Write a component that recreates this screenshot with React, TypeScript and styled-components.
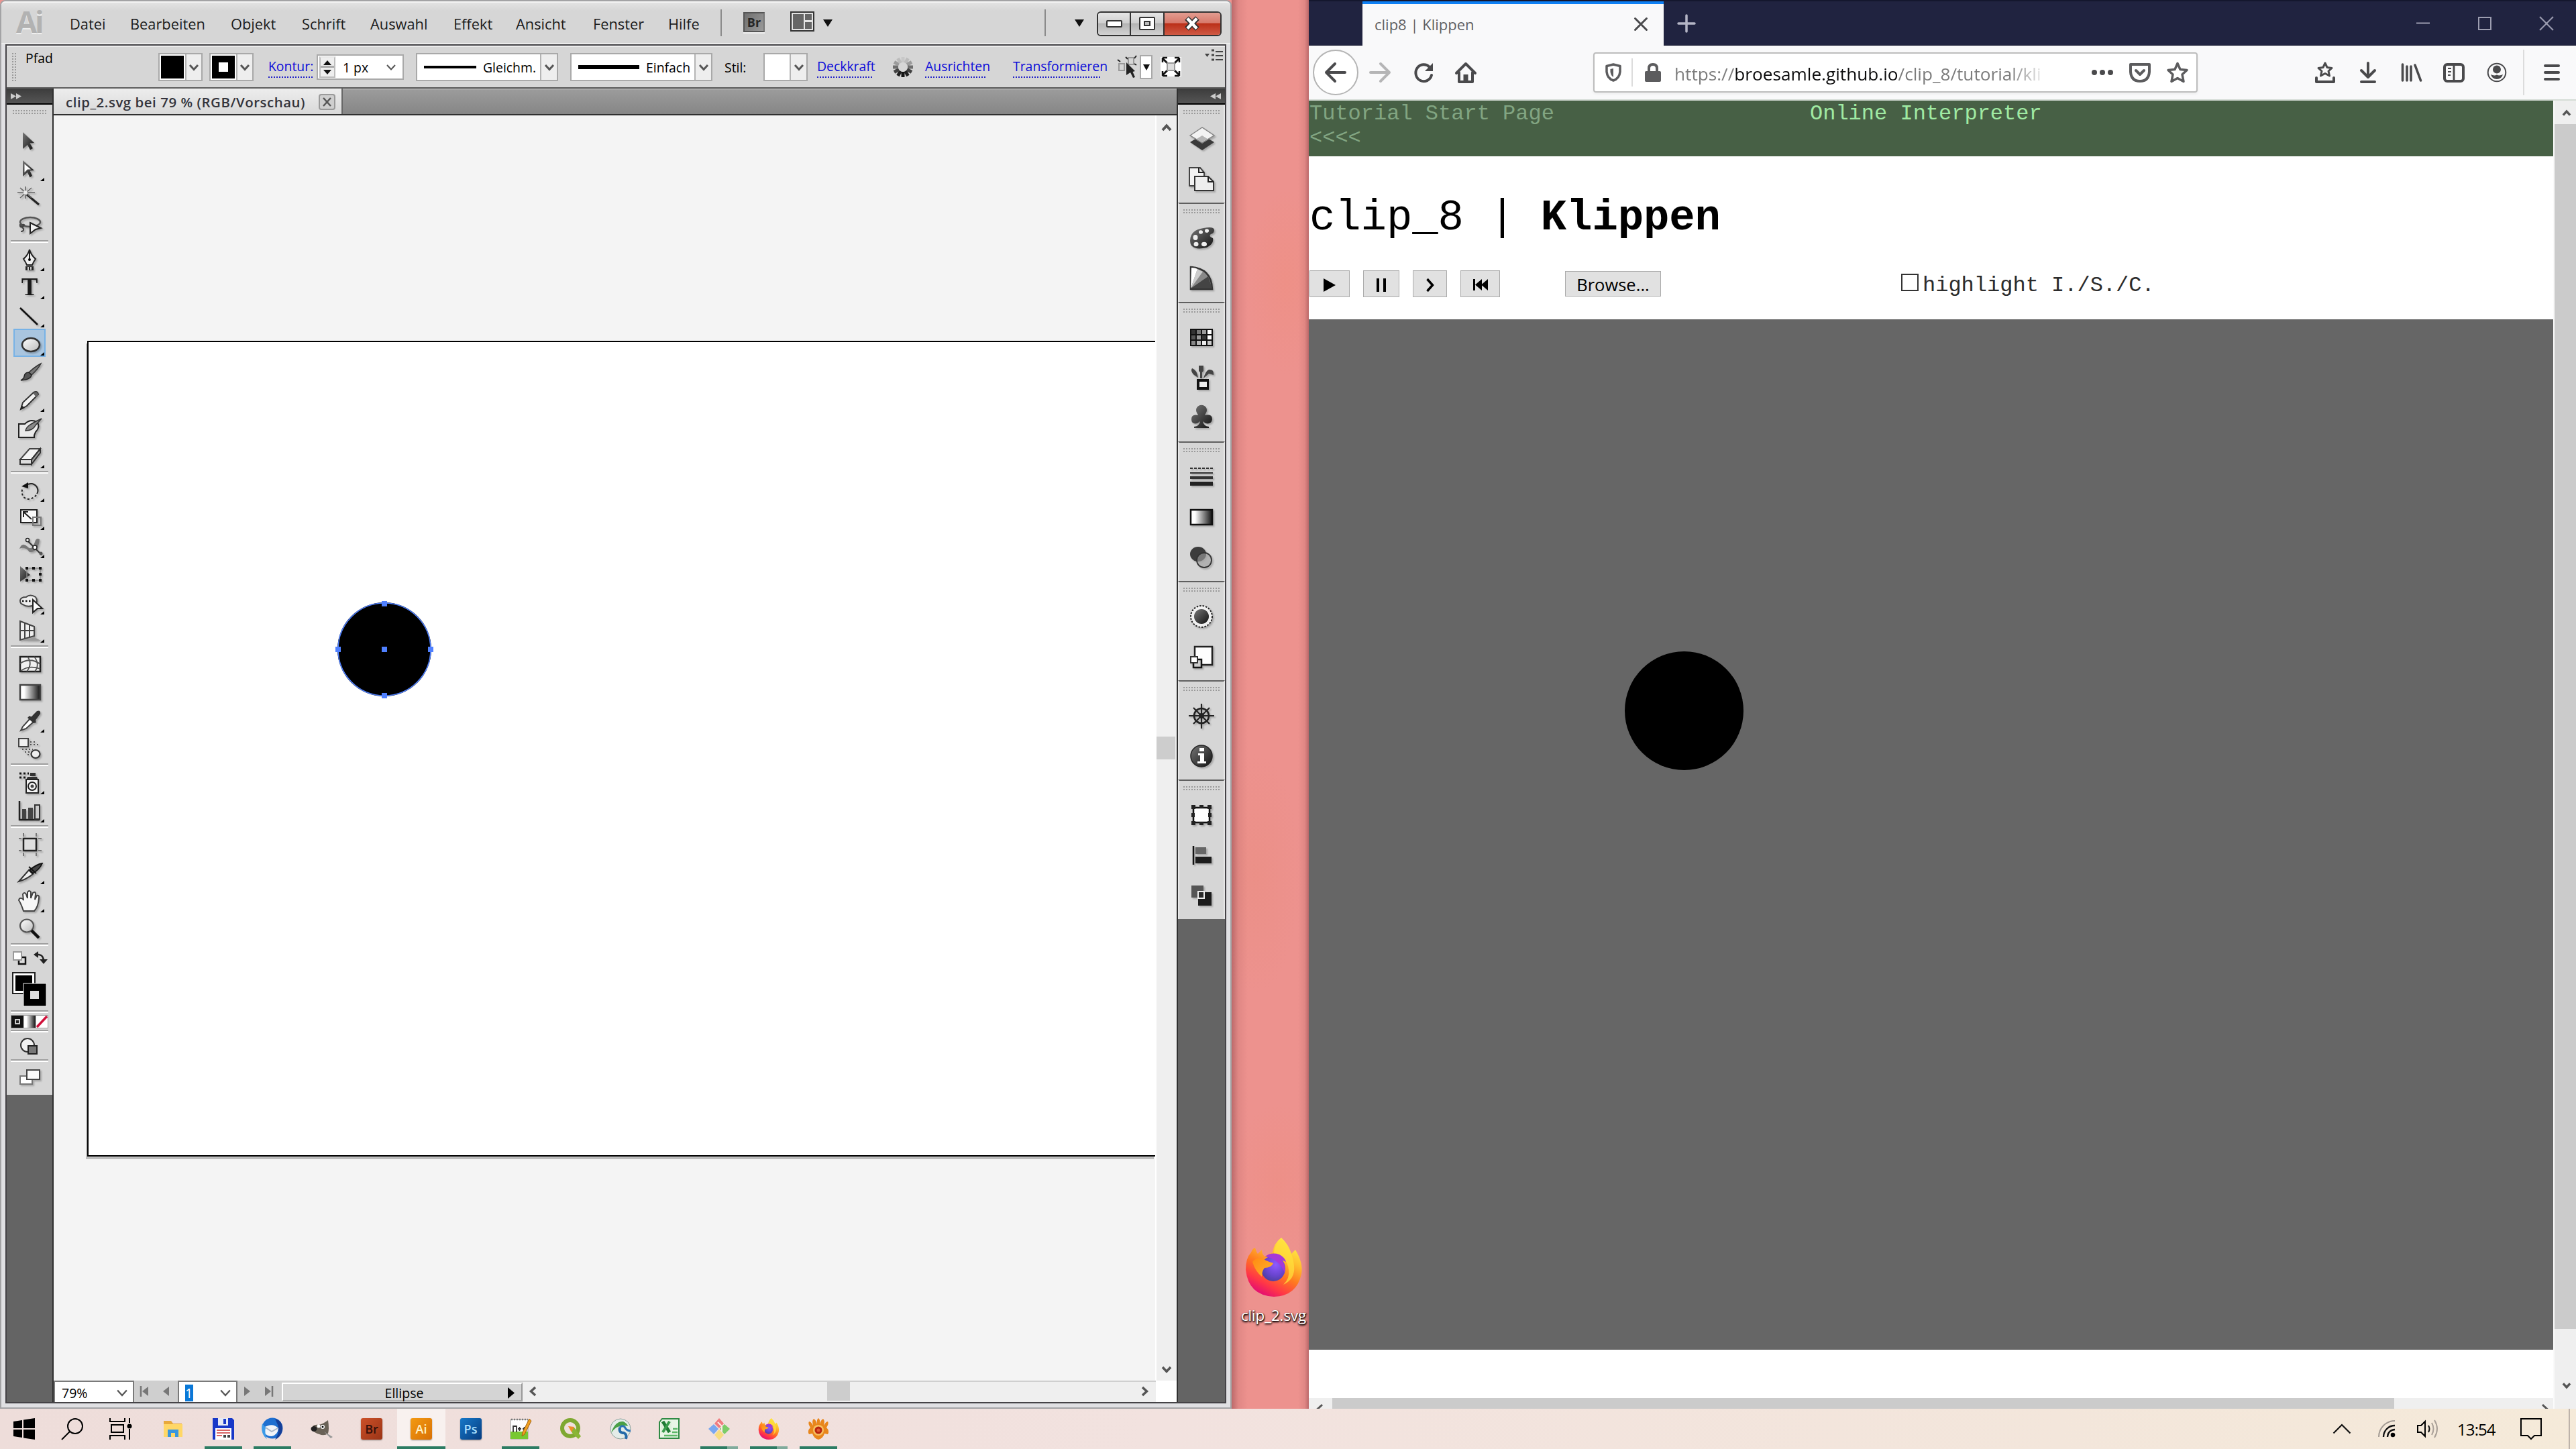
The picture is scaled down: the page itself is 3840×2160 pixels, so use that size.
import React from 'react';
import styled, { createGlobalStyle, css } from 'styled-components';

const UI = `"Open Sans", "Noto Sans", sans-serif`;
const MONO = `"Liberation Mono", monospace`;

const Global = createGlobalStyle`
  html, body { margin: 0; padding: 0; background: #ee9490; }
  *, *::before, *::after { box-sizing: border-box; }
`;

/* ---------- frame ---------- */

const Screen = styled.div`
  width: 3840px;
  height: 2160px;
  display: flex;
  flex-direction: column;
  overflow: hidden;
  font-family: ${UI};
  white-space: nowrap;
`;
const Windows = styled.div`
  display: flex;
  height: 2100px;
`;

/* ---------- Illustrator ---------- */

const AiWindow = styled.section`
  width: 1836px;
  height: 2100px;
  display: flex;
  flex-direction: column;
  background: #e0e0e3;
  border: 2px solid #a3a3a5;
  border-top-left-radius: 8px;
  border-top-right-radius: 8px;
`;
const MenuBar = styled.header`
  height: 64px;
  display: flex;
  align-items: center;
  padding: 0 12px 0 22px;
  border-top: 2px solid #f4f4f4;
  border-bottom: 2px solid #ececec;
  background: linear-gradient(#e2e2e2, #d6d6d6 20%);
  border-radius: 6px 6px 0 0;
`;
const AiMark = styled.div`
  width: 80px;
  font-size: 45px;
  font-weight: 700;
  letter-spacing: -3px;
  line-height: 56px;
  margin-top: -4px;
  color: #b2b2b2;
  text-shadow: 0 2px 0 #efefef;
`;
const MenuItem = styled.span<{ $w: number }>`
  width: ${(p) => p.$w}px;
  padding-top: 2px;
  font-size: 21.8px;
  color: #1c1c1c;
`;
const BarRule = styled.i<{ $ml?: number; $mr?: number }>`
  width: 2px;
  height: 40px;
  margin-left: ${(p) => p.$ml ?? 0}px;
  margin-right: ${(p) => p.$mr ?? 0}px;
  background: #8a8a8a;
`;
const Br = styled.span`
  width: 32px;
  height: 30px;
  margin: -3px 38px 0 0;
  display: grid;
  place-items: center;
  border: 2px solid #555;
  border-right-color: #777;
  background: linear-gradient(120deg, #707070, #9a9a9a);
  font-size: 18px;
  font-weight: 700;
  line-height: 1;
  color: #262626;
  box-shadow: 0 2px 0 #f0f0f0;
`;
const WinButtons = styled.div`
  display: flex;
  width: 186px;
  height: 37px;
  margin: 2px 0 0 19px;
  border: 2px solid #333;
  border-radius: 6px;
  overflow: hidden;
`;
const WinButton = styled.span<{ $w: number; $red?: boolean }>`
  width: ${(p) => p.$w}px;
  display: grid;
  place-items: center;
  border-right: ${(p) => (p.$red ? 'none' : '2px solid #333')};
  background: ${(p) =>
    p.$red
      ? 'linear-gradient(#e39c90, #d77a6c 45%, #bb3019 50%, #cf5a45)'
      : 'linear-gradient(#e6e6e6, #cfcfcf 45%, #b4b4b4 50%, #d2d2d2)'};
`;
const AiBody = styled.div`
  flex: 1;
  margin: 0 6px 6px;
  border: 2px solid #454347;
  display: flex;
  flex-direction: column;
`;
const ControlBar = styled.div`
  height: 64px;
  display: flex;
  align-items: center;
  padding-left: 8px;
  border-top: 2px solid #ececec;
  border-bottom: 2px solid #5e5e5e;
  background: #d6d6d6;
  font-size: 19.4px;
  color: #000;
`;
const VGrip = styled.i`
  width: 6px;
  height: 42px;
  background: repeating-linear-gradient(#9a9a9a 0 2px, transparent 2px 4px);
  mask: linear-gradient(90deg, #000 0 2px, transparent 2px 4px, #000 4px);
`;
const HGrip = styled.i<{ $w: number }>`
  display: block;
  width: ${(p) => p.$w}px;
  height: 6px;
  background: repeating-linear-gradient(90deg, #9a9a9a 0 2px, transparent 2px 4px);
  mask: linear-gradient(#000 0 2px, transparent 2px 4px, #000 4px);
`;
const ControlTitle = styled.span`
  width: 198px;
  padding-left: 14px;
  align-self: flex-start;
  line-height: 34px;
`;
const Field = styled.span<{ $w: number; $ml: number; $h?: number }>`
  width: ${(p) => p.$w}px;
  height: ${(p) => p.$h ?? 42}px;
  margin-left: ${(p) => p.$ml}px;
  display: flex;
  align-items: center;
  border: 2px solid #a9a9a9;
  background: #fff;
  flex: none;
`;
const Swatch = styled.i`
  width: 35px;
  height: 34px;
  margin: 0 2px;
  display: grid;
  place-items: center;
  background: #000;
`;
const Hole = styled.i`
  width: 14px;
  height: 14px;
  background: #fff;
`;
const Drop = styled.span`
  width: 25px;
  height: 100%;
  margin-left: auto;
  display: grid;
  place-items: center;
  border-left: 2px solid #b4b4b4;
  background: #eee;
`;
const Stroke = styled.i<{ $w: number; $h: number }>`
  width: ${(p) => p.$w}px;
  height: ${(p) => p.$h}px;
  margin: 0 10px;
  background: #000;
`;
const Spinner = styled.span`
  width: 24px;
  height: 32px;
  margin: 0 11px 0 2px;
  display: flex;
  flex-direction: column;
  justify-content: space-around;
  align-items: center;
  border: 2px solid #bdbdbd;
  border-top-color: #e8e8e8;
  background: linear-gradient(#eee 0 44%, #aaa 44% 52%, #eee 52%);
`;
const Push = styled.span`
  margin-left: auto;
  margin-right: 10px;
  display: flex;
`;
const LinkText = styled.span<{ $ml: number; $w: number }>`
  width: ${(p) => p.$w}px;
  height: 31px;
  margin-left: ${(p) => p.$ml}px;
  line-height: 27px;
  flex: none;
  color: #0d0dd8;
  background: repeating-linear-gradient(90deg, #2222c8 0 2px, transparent 2px 4px) left bottom / 100% 2px no-repeat;
`;
const Label = styled.span<{ $ml: number; $w: number }>`
  margin-left: ${(p) => p.$ml}px;
  width: ${(p) => p.$w}px;
`;
const Draw = styled.svg<{ $ml?: number; $shadow?: boolean }>`
  display: block;
  flex: none;
  overflow: visible;
  margin-left: ${(p) => p.$ml ?? 0}px;
  ${(p) =>
    p.$shadow &&
    css`
      filter: drop-shadow(2px 2px 1px rgba(0, 0, 0, 0.22));
    `}
`;
const PanelMenu = styled.span`
  align-self: flex-start;
  margin: 4px 0 0 34px;
`;
const Work = styled.div`
  flex: 1;
  display: flex;
  min-height: 0;
`;
const ToolColumn = styled.aside`
  width: 70px;
  border-right: 2px solid #303030;
  background: #646464;
`;
const PanelHead = styled.div<{ $right?: boolean }>`
  height: 24px;
  display: flex;
  align-items: center;
  justify-content: ${(p) => (p.$right ? 'flex-end' : 'flex-start')};
  padding: 0 6px;
  background: linear-gradient(#3c3c3c, #555);
  border-bottom: 2px solid #000;
`;
const Tools = styled.div`
  height: 1476px;
  padding: 8px 0 0;
  display: flex;
  flex-direction: column;
  align-items: center;
  background: #d6d6d6;
`;
const ToolGroup = styled.div<{ $first?: boolean }>`
  width: 56px;
  margin-top: ${(p) => (p.$first ? 18 : 0)}px;
  padding-bottom: 2px;
`;
const ToolRule = styled.i<{ $mb?: number }>`
  width: 56px;
  height: 4px;
  margin-bottom: ${(p) => p.$mb ?? 2}px;
  background: linear-gradient(#9e9e9e 50%, #fff 50%);
`;
const Tool = styled.div<{ $on?: boolean; $fly?: boolean }>`
  position: relative;
  height: 42px;
  width: 48px;
  margin-left: 4px;
  padding-top: 3px;
  display: grid;
  place-items: center;
  ${(p) =>
    p.$on &&
    css`
      background: #a9c5df;
      outline: 2px solid #77b2e6;
      outline-offset: -2px;
    `}
  ${(p) =>
    p.$fly &&
    css`
      &::after {
        content: '';
        position: absolute;
        right: 2px;
        bottom: 2px;
        border-left: 6px solid transparent;
        border-bottom: 5px solid #000;
      }
    `}
`;
const ToolRow = styled.div<{ $h: number }>`
  width: 60px;
  height: ${(p) => p.$h}px;
  display: flex;
  align-items: center;
  justify-content: space-around;
`;
const ModeRow = styled.div`
  display: flex;
  width: 56px;
  height: 20px;
  margin: 2px 0;
  border: 1px solid #999;
`;
const Document = styled.div`
  width: 1674px;
  display: flex;
  flex-direction: column;
`;
const TabStrip = styled.div`
  height: 40px;
  display: flex;
  border-bottom: 2px solid #303030;
  background: linear-gradient(#a8a8a8 0 2px, #9b9b9b 2px, #868686);
`;
const DocTab = styled.div`
  width: 431px;
  display: flex;
  align-items: center;
  justify-content: space-between;
  padding: 1px 9px 0 18px;
  border-right: 2px solid #666;
  background: linear-gradient(#ededed, #d9d9d9);
  font-size: 20.4px;
  font-weight: 600;
  letter-spacing: 0.55px;
  color: #33333b;
`;
const TabClose = styled.span`
  width: 25px;
  height: 24px;
  display: grid;
  place-items: center;
  border: 2px solid #9a9a9a;
  border-radius: 4px;
  background: #cfcfcf;
`;
const CanvasRow = styled.div`
  display: flex;
  height: 1886px;
`;
const Canvas = styled.div`
  width: 1644px;
  padding: 336px 0 0 50px;
  border-right: 2px solid #fff;
  background: #f4f4f4;
  overflow: hidden;
`;
const Artboard = styled.div`
  position: relative;
  height: 1216px;
  border: 2px solid #000;
  border-right: none;
  background: #fff;
  box-shadow: -2px 4px 0 #bdbdbd;
`;
const Selected = styled.svg`
  position: absolute;
  left: 361px;
  top: 378px;
`;
const VScroll = styled.div`
  width: 30px;
  display: flex;
  flex-direction: column;
  align-items: center;
  background: #efefef;
  padding-top: 12px;
`;
const VThumb = styled.i<{ $mt: number; $h: number; $mb: number }>`
  width: 28px;
  height: ${(p) => p.$h}px;
  margin: ${(p) => p.$mt}px 2px ${(p) => p.$mb}px 0;
  background: #cdcdcd;
`;
const StatusRow = styled.div`
  height: 32px;
  display: flex;
  background: #cfcfcf;
  font-size: 19.5px;
`;
const StatusField = styled.span<{ $w: number; $pl: number }>`
  width: ${(p) => p.$w}px;
  display: flex;
  align-items: center;
  justify-content: space-between;
  padding: 2px 8px 0 ${(p) => p.$pl}px;
  border: 2px solid #7a7a7a;
  border-width: 2px 2px 0 2px;
  background: #fff;
`;
const PageNo = styled.span`
  width: 12px;
  height: 25px;
  line-height: 25px;
  background: #0a78d7;
  color: #fff;
`;
const Steps = styled.span<{ $w: number }>`
  width: ${(p) => p.$w}px;
  display: flex;
  align-items: center;
  justify-content: space-around;
  padding-right: 4px;
`;
const ToolName = styled.span`
  width: 359px;
  margin-top: 3px;
  height: 28px;
  display: grid;
  grid-template-columns: 1fr 20px;
  align-items: center;
  padding: 0 10px 2px 36px;
  text-align: center;
  border: 2px solid #fff;
  border-right-color: #999;
  border-bottom-color: #aaa;
  background: #d4d4d4;
`;
const HScroll = styled.div`
  width: 944px;
  margin-top: 2px;
  display: flex;
  align-items: center;
  padding: 0 10px 2px 9px;
  background: #efefef;
`;
const HThumb = styled.i`
  width: 34px;
  height: 28px;
  margin: 0 432px 0 431px;
  background: #cdcdcd;
`;
const ScrollCorner = styled.i`
  flex: 1;
  background: #fff;
`;
const Dock = styled.aside`
  width: 72px;
  border-left: 2px solid #303030;
  background: #646464;
`;
const DockGroup = styled.div`
  display: flex;
  flex-direction: column;
  align-items: center;
  padding: 8px 0 5px;
  border: 2px solid #e6e6e6;
  border-width: 0 2px;
  background: #d6d6d6;
  & + & {
    border-top: 2px solid #5f5f5f;
  }
`;
const DockSlot = styled.div<{ $first?: boolean }>`
  height: 60px;
  margin-top: ${(p) => (p.$first ? 7 : 0)}px;
  padding-left: 2px;
  display: grid;
  place-items: center;
`;

/* ---------- desktop ---------- */

const Desktop = styled.div`
  width: 115px;
  display: flex;
  flex-direction: column;
  justify-content: flex-end;
  align-items: center;
  padding: 0 0 123px 10px;
  background:
    linear-gradient(90deg, rgba(110, 40, 50, 0.38), rgba(110, 40, 50, 0.1) 10px, transparent 24px),
    linear-gradient(270deg, rgba(110, 40, 50, 0.4), rgba(110, 40, 50, 0.1) 6px, transparent 16px),
    radial-gradient(60px 140px at 70% 20%, rgba(240, 140, 118, 0.3), transparent),
    radial-gradient(70px 180px at 30% 62%, rgba(232, 140, 125, 0.4), transparent),
    radial-gradient(70px 120px at 60% 84%, rgba(238, 138, 120, 0.3), transparent),
    #ed928e;
`;
const DesktopLabel = styled.span`
  margin-top: 12px;
  font-size: 22.4px;
  line-height: 32px;
  letter-spacing: -0.1px;
  color: #fff;
  text-shadow: 0 2px 3px #000, 1px 1px 2px #000;
`;

/* ---------- Firefox ---------- */

const Browser = styled.section`
  width: 1889px;
  display: flex;
  flex-direction: column;
  background: #fff;
`;
const TitleBar = styled.header`
  height: 68px;
  display: flex;
  align-items: center;
  padding-left: 80px;
  border-top: 2px solid #14172e;
  border-bottom: 1px solid #14172e;
  background: #202340;
`;
const BrowserTab = styled.div`
  width: 449px;
  height: 67px;
  margin-bottom: -2px;
  display: flex;
  align-items: center;
  justify-content: space-between;
  padding: 0 24px 3px 18px;
  border-top: 4px solid #0f80f4;
  background: #f9f9fa;
  font-size: 22px;
  color: #606063;
`;
const WindowControls = styled.div`
  display: flex;
  margin-left: auto;
  gap: 72px;
  padding-right: 34px;
`;
const NavBar = styled.nav`
  height: 82px;
  display: flex;
  align-items: center;
  padding: 0 0 0 6px;
  background: #f9f9fa;
  border-bottom: 2px solid #d5dcd5;
`;
const BackButton = styled.span`
  width: 68px;
  height: 68px;
  display: grid;
  place-items: center;
  border: 2px solid #b4b4b4;
  border-radius: 50%;
  background: #fff;
`;
const UrlBox = styled.div`
  width: 901px;
  height: 60px;
  margin-left: 174px;
  display: flex;
  align-items: center;
  padding: 0 12px 0 16px;
  border: 2px solid #bdbdbd;
  border-radius: 4px;
  background: #fff;
  box-shadow: 0 2px 4px rgba(0, 0, 0, 0.06);
`;
const UrlRule = styled.i<{ $h: number; $m: string }>`
  width: 2px;
  height: ${(p) => p.$h}px;
  margin: ${(p) => p.$m};
  background: #dcdcdc;
`;
const Url = styled.span`
  width: 570px;
  margin: 4px 0 0 20px;
  font-size: 26.2px;
  color: #7d7d7d;
  mask: linear-gradient(90deg, #000 500px, transparent 556px);
  b {
    font-weight: 400;
    color: #0c0c0d;
  }
`;
const UrlActions = styled.span`
  display: flex;
  gap: 24px;
  margin-left: auto;
`;
const NavIcons = styled.span`
  display: flex;
  align-items: center;
  gap: 32px;
  margin-left: 174px;
`;
const Viewport = styled.div`
  display: flex;
  flex: 1;
  min-height: 0;
`;
const Page = styled.main`
  width: 1857px;
  display: flex;
  flex-direction: column;
  font-family: ${MONO};
`;
const PageNav = styled.div`
  height: 83px;
  display: grid;
  grid-template-columns: 746px 1fr;
  padding: 2px 0 0 1px;
  background: #476045;
  font-size: 32px;
  line-height: 36px;
`;
const PageLink = styled.span<{ $bright?: boolean }>`
  color: ${(p) => (p.$bright ? '#a0eaa3' : '#82a582')};
`;
const Heading = styled.h1`
  margin: 54px 0 0 1px;
  font-size: 64px;
  line-height: 76px;
  font-weight: 400;
  letter-spacing: -0.1px;
  color: #000;
`;
const Controls = styled.div`
  height: 40px;
  margin-top: 40px;
  display: flex;
  align-items: center;
  padding-left: 1px;
`;
const PageButton = styled.button<{ $w: number; $mr: number; $h?: number }>`
  width: ${(p) => p.$w}px;
  height: ${(p) => p.$h ?? 40}px;
  margin: 0 ${(p) => p.$mr}px 0 0;
  padding: 3px 0 0;
  display: grid;
  place-items: center;
  border: 1px solid #aaa;
  background: #e1e1e1;
  font: 25.5px ${UI};
  line-height: 1;
  color: #000;
`;
const Check = styled.i`
  width: 26px;
  height: 26px;
  margin: 0 6px 4px 0;
  border: 2px solid #333;
  background: #fff;
`;
const CheckLabel = styled.span`
  margin-top: 6px;
  font-size: 32px;
  line-height: 36px;
  color: #2c2c2c;
`;
const Stage = styled.div`
  height: 1536px;
  margin-top: 33px;
  padding: 495px 0 0 471px;
  background: #666;
`;
const Dot = styled.i`
  display: block;
  width: 177px;
  height: 177px;
  border-radius: 50%;
  background: #000;
`;
const PageHScroll = styled.div`
  height: 16px;
  margin-top: 72px;
  display: flex;
  background: #efefef;
  overflow: hidden;
  padding: 0 0 0 10px;
  & > i {
    width: 1583px;
    margin: 0 217px 0 11px;
    background: #cbcbcb;
    flex: none;
  }
  & > svg {
    margin-top: 9px;
  }
`;
const PageVScroll = styled.div`
  flex: 1;
  display: flex;
  flex-direction: column;
  align-items: center;
  justify-content: space-between;
  padding: 13px 0 29px 4px;
  background: #efefef;
  border-left: 2px solid #fafafa;
  & > i {
    width: 32px;
    height: 1796px;
    margin: 8px 0 76px -4px;
    background: #cbcbcb;
  }
`;

/* ---------- taskbar ---------- */

const Taskbar = styled.footer`
  height: 60px;
  display: flex;
  background: linear-gradient(90deg, #eeddda, #f2e2df 45%, #f3e6db 80%, #f5ead9);
`;
const TaskItem = styled.span<{ $w: number; $on?: boolean }>`
  width: ${(p) => p.$w}px;
  display: flex;
  flex-direction: column;
  align-items: center;
  padding-top: 14px;
  background: ${(p) => (p.$on ? '#f8f1ef' : 'transparent')};
`;
const Running = styled.i<{ $w: number; $more?: boolean }>`
  width: ${(p) => p.$w}px;
  height: 4px;
  margin-top: 10px;
  background: ${(p) => (p.$more ? 'linear-gradient(90deg, #2c7c63 40px, #80ab9c 40px)' : '#2c7c63')};
`;
const AdobeTile = styled.span<{ $bg: string; $fg: string }>`
  width: 32px;
  height: 32px;
  display: grid;
  place-items: center;
  border-radius: 3px;
  background: ${(p) => p.$bg};
  color: ${(p) => p.$fg};
  font-size: 18px;
  font-weight: 600;
  line-height: 1;
  box-shadow: 0 1px 2px rgba(0, 0, 0, 0.4);
`;
const Tray = styled.span`
  display: flex;
  align-items: center;
  margin-left: auto;
  width: 362px;
  border-right: 2px solid #bdb3aa;
  margin-right: 9px;
`;
const Clock = styled.span`
  margin: 0 0 0 26px;
  width: 94px;
  font-size: 24px;
  letter-spacing: -0.9px;
  color: #000;
`;

/* ---------- drawings ---------- */

const HiddenDefs = styled.svg`
  position: absolute;
`;

const Defs = () => (
  <HiddenDefs width="0" height="0" aria-hidden>
    <defs>
      <linearGradient id="lite" x1="0" y1="0" x2="1" y2="1">
        <stop offset="0" stopColor="#fff" />
        <stop offset="1" stopColor="#bbb" />
      </linearGradient>
      <linearGradient id="dark" x1="0" y1="0" x2="1" y2="1">
        <stop offset="0" stopColor="#777" />
        <stop offset="1" stopColor="#111" />
      </linearGradient>
      <linearGradient id="ramp">
        <stop offset="0" stopColor="#fff" />
        <stop offset=".2" stopColor="#fff" />
        <stop offset="1" stopColor="#111" />
      </linearGradient>
      <linearGradient id="foxBody" x1=".8" y1=".05" x2=".3" y2="1">
        <stop offset="0" stopColor="#fff14a" />
        <stop offset=".3" stopColor="#ffbd2e" />
        <stop offset=".55" stopColor="#ff7a1f" />
        <stop offset=".8" stopColor="#ff3647" />
        <stop offset="1" stopColor="#e00878" />
      </linearGradient>
      <radialGradient id="foxCore" cx=".6" cy=".35" r=".7">
        <stop offset="0" stopColor="#9059ff" />
        <stop offset=".6" stopColor="#6a45d0" />
        <stop offset="1" stopColor="#4a3f9c" />
      </radialGradient>
      <linearGradient id="foxHead" x1="0" y1="0" x2="1" y2="1">
        <stop offset="0" stopColor="#ff8a12" />
        <stop offset="1" stopColor="#ffb52e" />
      </linearGradient>
    </defs>
  </HiddenDefs>
);

const Chevron = ({ s = 14, dir = 'down', c = '#555', sw = 3 }: { s?: number; dir?: string; c?: string; sw?: number }) => {
  const rot: Record<string, number> = { down: 0, left: 90, up: 180, right: 270 };
  return (
    <Draw width={s} height={s} viewBox="0 0 14 14">
      <path d="M1 4 L7 10.5 L13 4" fill="none" stroke={c} strokeWidth={sw} transform={`rotate(${rot[dir]} 7 7)`} />
    </Draw>
  );
};
const Tri = ({ w, h, d, c = '#111', ml }: { w: number; h: number; d: 'up' | 'down' | 'left' | 'right'; c?: string; ml?: number }) => {
  const p = { up: `0,${h} ${w},${h} ${w / 2},0`, down: `0,0 ${w},0 ${w / 2},${h}`, left: `${w},0 ${w},${h} 0,${h / 2}`, right: `0,0 0,${h} ${w},${h / 2}` }[d];
  return (
    <Draw width={w} height={h} $ml={ml}>
      <polygon points={p} fill={c} />
    </Draw>
  );
};

const S = { fill: 'none', stroke: '#222', strokeWidth: 2 } as const;

/* tool drawings on a 34 x 34 grid */
const toolArt: Record<string, React.ReactNode> = {
  select: (<path d="M7 3 L24 19 L17.500 19.500 L22 27 L18 29.500 L14 22 L7 28Z" fill="url(#dark)" />),
  direct: (<><path d="M7 3 L24 18 L17.500 18.500 L21 26 L17.500 28.500 L14 21 L7 27Z" fill="url(#dark)" /><path d="M9.500 8.500 L19 16.500 L14 16.500 L9.500 21Z" fill="#fff" /></>),
  wand: (<><path d="M13 12 L31 27" stroke="#222" strokeWidth="3" /><path d="M-1 9H25 M11 0V18 M3 2 L20 17 M20 2 L3 17" stroke="#666" strokeWidth="1.600" /><circle cx="11" cy="9" r="3" fill="#e8e8e8" /></>),
  lasso: (<><ellipse cx="18" cy="11" rx="15" ry="7" {...S} stroke="#555" strokeWidth="2.500" /><path d="M3 14 q-1 6 4 4 q4 -4 0 -3 q-4 1 1 6 q1 4 -4 4" {...S} stroke="#444" /><path d="M18 12 L34 20 L26 22 L18 28Z" fill="#f2f2f2" stroke="#222" strokeWidth="2" /></>),
  pen: (<><path d="M17 2 Q19 10 26 16 Q23 20 21 25 H13 Q11 20 8 16 Q15 10 17 2Z" fill="#eee" stroke="#222" strokeWidth="2" /><path d="M17 3V17" stroke="#222" strokeWidth="2" /><circle cx="17" cy="17" r="2" /><path d="M11 27H23V33H11Z" fill="#222" /><path d="M15 28V33 M19 28V32" stroke="#ccc" strokeWidth="2" /></>),
  type: (<text x="17" y="28" fontFamily="Liberation Serif" fontWeight="700" fontSize="37" textAnchor="middle" fill="#1a1a1a">T</text>),
  line: (<path d="M3 5 L29 30" stroke="#111" strokeWidth="2.600" />),
  ellipse: (<ellipse cx="19" cy="18" rx="13" ry="10" fill="url(#lite)" stroke="#333" strokeWidth="2.600" />),
  brush: (<><path d="M34 4 Q26 8 16 17 L20 21 Q30 12 34 4Z" fill="#777" stroke="#333" strokeWidth="1.500" /><path d="M16 17 L20 21 Q19 28 4 29 Q9 26 9 23 Q10 17 16 17Z" fill="#555" stroke="#222" strokeWidth="1.500" /></>),
  pencil: (<><path d="M4 30 L7 20 L23 5 Q29 2 30 8 L13 25Z" fill="#f2f2f2" stroke="#333" strokeWidth="2" /><path d="M3 31 L5 24 L10 28Z" fill="#222" /><path d="M22 6 Q29 2 30 9 L27 12Z" fill="#666" /></>),
  blob: (<><path d="M1 10H10 Q18 2 28 7 Q34 14 26 22 L24 27 V30 H1Z" fill="#eaeaea" stroke="#222" strokeWidth="2" /><path d="M35 2 Q26 6 18 11 Q12 15 11 20 Q22 20 26 12Z" fill="#888" stroke="#333" strokeWidth="1.500" /></>),
  eraser: (<><path d="M3 21 L17 5 H33 L20 21Z" fill="#f4f4f4" stroke="#444" strokeWidth="2" /><path d="M3 21H20V28H3Z" fill="#ddd" stroke="#333" strokeWidth="2" /><path d="M20 21 L33 5 V11 L20 28Z" fill="#999" stroke="#333" strokeWidth="2" /></>),
  rotate: (<><path d="M10 10 Q22 3 28 12 Q31 18 28 22" {...S} /><path d="M27 24 Q18 34 8 27 Q4 20 7 13" {...S} strokeDasharray="3 3" /><path d="M5 11 L15 5 V14Z" fill="#111" /></>),
  scale: (<><rect x="4" y="4" width="24" height="19" fill="#fafafa" stroke="#222" strokeWidth="2" /><rect x="22" y="15" width="12" height="12" fill="none" stroke="#777" strokeWidth="2" /><path d="M8 7 L20 18 M8 15V7H15" {...S} /></>),
  width: (<><path d="M2 20 Q6 9 14 17 Q20 24 25 10 Q27 3 32 6 Q30 26 17 25 Q11 16 2 20Z" fill="#777" /><path d="M13 7 L34 28" stroke="#333" strokeWidth="2" /><circle cx="14" cy="7" r="2.500" fill="#fff" stroke="#222" strokeWidth="1.500" /><circle cx="25" cy="18" r="3" fill="#fff" stroke="#222" strokeWidth="1.500" /><circle cx="34" cy="27" r="2.500" fill="#555" /></>),
  free: (<><path d="M3 4 L18 17 L3 27Z" fill="url(#dark)" /><rect x="13" y="7" width="20" height="18" fill="none" stroke="#888" strokeWidth="1.500" /><path d="M11 5h4v4h-4z M21 5h4v4h-4z M31 5h4v4h-4z M31 14h4v4h-4z M31 23h4v4h-4z M21 23h4v4h-4z M11 23h4v4h-4z" fill="#111" /></>),
  builder: (<><path d="M3 13 Q4 8 12 8 Q18 3 26 8 Q31 15 24 20 Q14 24 7 19 Q3 18 3 13Z" fill="#eee" stroke="#444" strokeWidth="2" /><path d="M6 14H24" stroke="#111" strokeWidth="2.500" strokeDasharray="2.500 2.500" /><path d="M22 12 L36 25 L29 25 L22 31Z" fill="#fff" stroke="#222" strokeWidth="2" /></>),
  perspective: (<><path d="M3 2 L24 10 V24 L3 30Z" fill="#eee" stroke="#444" strokeWidth="2" /><path d="M3 16H24 M10 4V28 M17 7V26" stroke="#444" strokeWidth="2" /><path d="M5 31 H34 L24 26Z" fill="#9a9a9a" /></>),
  mesh: (<><rect x="3" y="5" width="30" height="22" fill="#f0f0f0" stroke="#222" strokeWidth="2.500" /><path d="M3 15 Q18 5 33 16 M4 26 Q16 17 33 23 M14 5 Q22 15 13 27 M24 5 Q33 16 25 27" {...S} stroke="#555" strokeWidth="1.800" /></>),
  gradient: (<rect x="3" y="5" width="30" height="22" fill="url(#ramp)" stroke="#444" strokeWidth="2.500" />),
  dropper: (<><path d="M4 31 L7 25 L18 13 L23 18 L12 28Z" fill="#fff" stroke="#444" strokeWidth="2" /><path d="M17 9 Q20 12 22 8 L28 2 Q34 0 33 6 L28 13 Q25 15 27 19 L23 20 L14 12Z" fill="#333" /></>),
  blend: (<><rect x="1" y="1" width="14" height="12" fill="#f2f2f2" stroke="#444" strokeWidth="2" /><path d="M18 6h10 M18 10h12 M6 17h16 M10 21h10 M14 25h4" stroke="#555" strokeWidth="2" strokeDasharray="2 3" /><ellipse cx="26" cy="24" rx="6.500" ry="6" fill="#eee" stroke="#333" strokeWidth="2.200" /></>),
  spray: (<><path d="M2 3H16 M2 9H14" stroke="#111" strokeWidth="3" strokeDasharray="3 3" /><path d="M18 2h8v5h-8z M14 8 H28 L30 13 H12Z" fill="#333" /><rect x="12" y="12" width="18" height="20" fill="#f4f4f4" stroke="#222" strokeWidth="2" /><circle cx="21" cy="22" r="6" {...S} strokeWidth="2" /><circle cx="21" cy="22" r="2.500" fill="#444" /></>),
  graph: (<><path d="M2 2V30H32" {...S} strokeWidth="2.500" /><path d="M6 14h6v15h-6z M15 12h7v17h-7z" fill="#444" /><rect x="25" y="8" width="7" height="21" fill="#ccc" stroke="#333" strokeWidth="2" /></>),
  artboard: (<><rect x="8" y="8" width="19" height="18" fill="#dedede" stroke="#222" strokeWidth="2.500" /><path d="M8 0V5 M27 0V5 M8 29V34 M27 29V34 M1 8H5 M30 8H35 M1 26H5 M30 26H35" stroke="#777" strokeWidth="2" /></>),
  slice: (<><path d="M1 30 L16 13 L22 19 Q12 27 1 30Z" fill="#eee" stroke="#333" strokeWidth="2" /><path d="M16 8 L27 18 M17 13 Q28 4 36 3 Q32 12 22 18Z" fill="#444" stroke="#111" strokeWidth="1.800" /></>),
  hand: (<path d="M8 32 Q4 20 1 16 Q2 11 7 14 L8 16 L7 7 Q9 3 12 7 L14 13 V4 Q17 0 19 4 V13 L22 5 Q26 2 26 7 L25 15 L28 9 Q32 8 31 13 Q30 26 24 32Z" fill="#f7f7f7" stroke="#444" strokeWidth="2" />),
  zoom: (<><ellipse cx="13" cy="12" rx="10" ry="9.500" fill="url(#lite)" stroke="#555" strokeWidth="2.200" /><path d="M20 19 L31 30" stroke="#111" strokeWidth="4.500" /></>),
};

const toolGroups: [string, boolean][][] = [
  [['select', false], ['direct', true], ['wand', false], ['lasso', false]],
  [['pen', true], ['type', true], ['line', true], ['ellipse', true], ['brush', false], ['pencil', true], ['blob', false], ['eraser', true]],
  [['rotate', true], ['scale', true], ['width', true], ['free', false], ['builder', true], ['perspective', true]],
  [['mesh', false], ['gradient', false], ['dropper', true], ['blend', false]],
  [['spray', true], ['graph', true]],
  [['artboard', false], ['slice', true], ['hand', true], ['zoom', false]],
];

/* dock drawings on a 36 x 36 grid */
const dockArt: Record<string, React.ReactNode> = {
  layers: (<><path d="M0 23 L18 12 L36 23 L18 35Z" fill="#3a3a3a" /><path d="M0 13 L18 1 L36 13 L18 24Z" fill="#f3f3f3" stroke="#888" strokeWidth="1.500" /><path d="M10 18 L18 13 L26 18 L18 23Z" fill="#b5b5b5" /></>),
  pages: (<><path d="M-1 1H15L21 8V28H-1Z" fill="#f2f2f2" stroke="#444" strokeWidth="2" /><path d="M7 14H27L35 22V35H7Z" fill="#eee" stroke="#333" strokeWidth="2" /><path d="M13 1V8H21 M27 14V22H35" {...S} /></>),
  palette: (<><path d="M0 22 Q0 6 20 3 Q36 0 36 6 Q36 11 31 12 Q27 15 34 18 Q36 26 25 32 Q8 36 2 29Q0 26 0 22Z" fill="url(#dark)" /><g fill="#eee"><ellipse cx="8" cy="17" rx="3.500" ry="4" /><ellipse cx="16" cy="9" rx="3" ry="2.800" /><ellipse cx="25" cy="7" rx="3" ry="2.800" /><ellipse cx="9" cy="27" rx="3.500" ry="3.300" /><ellipse cx="21" cy="27" rx="4" ry="3.300" /></g></>),
  guide: (<><path d="M1 1 Q32 3 33 34H1Z" fill="#888" stroke="#333" strokeWidth="2.500" /><path d="M1 33 L2 2 Q8 2 11 4Z" fill="#fff" /><path d="M1 33 L11 4 L19 8Z" fill="#ccc" /><path d="M1 33 L27 15 L33 33Z" fill="#444" /></>),
  swatches: (<><rect x="0" y="5" width="34" height="26" fill="#111" />{[0, 1, 2].map((r) => [0, 1, 2, 3].map((c) => (<rect key={`${r}${c}`} x={2 + c * 8} y={7 + r * 8} width="6" height="6" fill={[['#333', '#777', '#999', '#fff'], ['#555', '#999', '#333', '#fff'], ['#888', '#bbb', '#eee', '#ccc']][r][c]} />)))}</>),
  brushes: (<><path d="M3 4 Q10 6 12 18 L6 14Q0 8 3 4Z M13 0h7v8l-2 2v9h-3v-9l-2-2z M20 19 Q23 8 28 6 Q36 5 35 14 L28 12Z" fill="#444" /><path d="M10 20H28V36H10Z" fill="#111" /><path d="M14 24H25V32H14Z" fill="#eee" /></>),
  club: (<path d="M10 10 A8 7.500 0 1 1 24 10 L22 14 Q33 11 33 20 Q32 28 23 26 L19 23 Q20 30 28 31 V33 H6 V31 Q14 30 15 23 L11 26 Q2 28 2 20 Q2 12 12 14Z" fill="url(#dark)" />),
  stroke: (<><path d="M0 5H34" stroke="#333" strokeWidth="2" strokeDasharray="4 2" /><path d="M0 12H34" stroke="#333" strokeWidth="2" /><path d="M0 19H34" stroke="#333" strokeWidth="4" /><path d="M0 28H34" stroke="#222" strokeWidth="6" /></>),
  gradient: (<rect x="1" y="7" width="32" height="22" fill="url(#ramp)" stroke="#111" strokeWidth="2.500" />),
  transp: (<><ellipse cx="12" cy="13" rx="12" ry="11" fill="#3c3c3c" /><ellipse cx="21" cy="22" rx="11" ry="11" fill="#aaa" fillOpacity=".55" stroke="#333" strokeWidth="1.800" /></>),
  appear: (<><circle cx="17" cy="18" r="16" fill="#f0f0f0" stroke="#222" strokeWidth="2" strokeDasharray="2.500 2" /><circle cx="17" cy="18" r="11" fill="url(#dark)" /></>),
  styles: (<><rect x="7" y="3" width="26" height="27" fill="#fdfdfd" stroke="#222" strokeWidth="2.500" /><rect x="5" y="22" width="12" height="12" fill="#ccc" stroke="#111" strokeWidth="2.500" /><rect x="1" y="18" width="10" height="9" fill="#fff" stroke="#333" strokeWidth="2" /></>),
  wheel: (<><circle cx="17" cy="18" r="11" {...S} strokeWidth="2.600" /><path d="M-2 18H36 M17 0V37 M5 6 L29 30 M29 6 L5 30" stroke="#222" strokeWidth="2.200" /><circle cx="17" cy="18" r="4" fill="#222" /></>),
  info: (<><circle cx="17" cy="18" r="16" fill="url(#dark)" stroke="#222" strokeWidth="1.500" /><path d="M14 6h7v5h-7z M12 14h9v12h3v3h-13v-3h4v-9h-3z" fill="#fff" /></>),
  transform: (<><rect x="5" y="7" width="24" height="22" fill="#fff" stroke="#111" strokeWidth="2.500" /><path d="M2 3h6v6h-6z M14 3h6v5h-6z M26 3h6v6h-6z M2 15h5v6h-5z M27 15h5v6h-5z M2 27h6v6h-6z M14 28h6v5h-6z M26 27h6v6h-6z" fill="#222" /></>),
  align: (<><path d="M5 4V32" stroke="#111" strokeWidth="2.500" /><rect x="8" y="6" width="16" height="10" fill="#666" /><rect x="8" y="20" width="24" height="10" fill="#1c1c1c" /></>),
  pathfinder: (<><rect x="2" y="3" width="18" height="18" fill="#555" /><rect x="12" y="13" width="20" height="20" fill="#1c1c1c" /><rect x="12" y="12" width="9" height="10" fill="#2a2a2a" stroke="#eee" strokeWidth="2" /></>),
};
const dockGroups = [
  ['layers', 'pages'],
  ['palette', 'guide'],
  ['swatches', 'brushes', 'club'],
  ['stroke', 'gradient', 'transp'],
  ['appear', 'styles'],
  ['wheel', 'info'],
  ['transform', 'align', 'pathfinder'],
];

const Fox = ({ s }: { s: number }) => (
  <Draw width={s} height={s} viewBox="0 0 84 88">
    <path d="M53 0 Q64 10 68 24 Q72 20 74 18 Q86 38 83 54 Q76 87 42 88 Q4 86 0 48 Q0 30 8 22 Q10 16 14 15 Q16 22 18 24 L24 18 Q24 24 28 28 L40 22 Q42 8 53 0Z" fill="url(#foxBody)" />
    <path d="M53 2 Q42 12 42 24 Q62 28 64 48 Q66 60 56 70 Q74 62 72 42 Q70 18 53 2Z" fill="#ffdf3c" fillOpacity=".75" />
    <ellipse cx="41" cy="46" rx="18" ry="19" fill="url(#foxCore)" />
    <path d="M29 28 Q38 21 50 25 Q58 29 60 36 L53 33 Q60 42 58 52 Q50 32 29 28Z" fill="#a638d8" />
    <path d="M10 36 Q14 30 24 30 Q28 34 41 38 Q38 45 28 45 Q24 50 24 58 Q14 50 10 36Z" fill="url(#foxHead)" />
  </Draw>
);

/* ---------- sections ---------- */

const menus: [string, number][] = [
  ['Datei', 90], ['Bearbeiten', 150], ['Objekt', 106], ['Schrift', 102], ['Auswahl', 124],
  ['Effekt', 93], ['Ansicht', 115], ['Fenster', 112], ['Hilfe', 78],
];

const AiMenu = () => (
  <MenuBar>
    <AiMark>Ai</AiMark>
    {menus.map(([m, w]) => (
      <MenuItem key={m} $w={w}>{m}</MenuItem>
    ))}
    <BarRule $mr={32} />
    <Br>Br</Br>
    <Draw width="36" height="30">
      <rect x="1" y="-1" width="34" height="28" fill="#e4e4e4" stroke="#333" strokeWidth="2" />
      <path d="M4 2h16v22h-16z M22 2h10v9h-10z M22 14h10v10h-10z" fill="#666" />
    </Draw>
    <Tri w={14} h={11} d="down" ml={13} />
    <BarRule $ml={316} $mr={43} />
    <Tri w={14} h={11} d="down" />
    <WinButtons>
      <WinButton $w={50}>
        <Draw width="24" height="12"><rect x="1" y="2" width="22" height="9" rx="1" fill="#fff" stroke="#333" strokeWidth="2" /></Draw>
      </WinButton>
      <WinButton $w={50}>
        <Draw width="24" height="20"><rect x="1" y="1" width="22" height="18" rx="1" fill="#fff" stroke="#333" strokeWidth="2" /><rect x="8" y="7" width="8" height="6" fill="#bbb" stroke="#333" strokeWidth="2" /></Draw>
      </WinButton>
      <WinButton $w={84} $red>
        <Draw width="26" height="20" viewBox="0 0 26 20">
          <path d="M5 2 L21 18 M21 2 L5 18" stroke="#333" strokeWidth="8" />
          <path d="M6 2.500 L20 17.500 M20 2.500 L6 17.500" stroke="#fff" strokeWidth="4.600" />
        </Draw>
      </WinButton>
    </WinButtons>
  </MenuBar>
);

const AiControls = () => (
  <ControlBar>
    <VGrip />
    <ControlTitle>Pfad</ControlTitle>
    <Field $w={66} $ml={14}><Swatch /><Drop><Chevron /></Drop></Field>
    <Field $w={66} $ml={10}><Swatch><Hole /></Swatch><Drop><Chevron /></Drop></Field>
    <LinkText $ml={22} $w={67}>Kontur:</LinkText>
    <Field $w={130} $ml={5} $h={38}>
      <Spinner><Tri w={12} h={7} d="up" /><Tri w={12} h={7} d="down" /></Spinner>
      1 px
      <Push><Chevron sw={2} /></Push>
    </Field>
    <Field $w={212} $ml={18}><Stroke $w={78} $h={4} />Gleichm.<Drop><Chevron /></Drop></Field>
    <Field $w={212} $ml={18}><Stroke $w={91} $h={6} />Einfach<Drop><Chevron /></Drop></Field>
    <Label $ml={18} $w={58}>Stil:</Label>
    <Field $w={66} $ml={0}><Drop><Chevron /></Drop></Field>
    <LinkText $ml={14} $w={84}>Deckkraft</LinkText>
    <Draw width="34" height="34" viewBox="-17 -17 34 34" $ml={27}>
      {Array.from({ length: 12 }, (_, i) => {
        const tone = Math.round(200 - 90 * (1 - Math.cos((i * Math.PI) / 6)));
        return <rect key={i} x="-2.500" y="-15" width="5" height="8" fill={`rgb(${tone},${tone},${tone})`} transform={`rotate(${i * 30})`} />;
      })}
    </Draw>
    <LinkText $ml={16} $w={91}>Ausrichten</LinkText>
    <LinkText $ml={40} $w={131}>Transformieren</LinkText>
    <Draw width="32" height="34" $ml={25}>
      <path d="M2 12h8v10h-8z M16 3h8v10h-8z" fill="none" stroke="#999" strokeWidth="2" />
      <path d="M0 6l4 3 M12 2l3 3 M28 0l-3 4 M28 14l-3-2" stroke="#222" strokeWidth="2" />
      <path d="M13 10 L26 23 L22.500 24 L26 32 L23 33 L19 25 L13 29Z" fill="#222" />
    </Draw>
    <Field $w={19} $ml={1} $h={36}><Tri w={10} h={9} d="down" ml={3} /></Field>
    <Draw width="32" height="30" $ml={12}>
      <rect width="31" height="29" fill="#fff" />
      <path d="M3 2l8 8 M28 2l-8 8 M3 27l8-8 M28 27l-8-8" stroke="#111" strokeWidth="3" />
      <path d="M3 1h7 M3 1v7 M28 1h-7 M28 1v7 M3 28h7 M3 28v-7 M28 28h-7 M28 28v-7" stroke="#111" strokeWidth="2.500" />
      <rect x="10" y="9" width="11" height="11" fill="#ddd" stroke="#999" strokeWidth="2" />
    </Draw>
    <PanelMenu>
      <Draw width="27" height="16">
        <path d="M0 6h7l-3.500 5z" fill="#444" />
        <path d="M10 1h4 M10 8h4 M10 15h4" stroke="#444" strokeWidth="3" />
        <path d="M16 3h11 M16 9h11 M16 15h11" stroke="#444" strokeWidth="2" />
      </Draw>
    </PanelMenu>
  </ControlBar>
);

const AiTools = () => (
  <ToolColumn>
    <PanelHead><Tri w={8} h={9} d="right" c="#ccc" /><Tri w={8} h={9} d="right" c="#ccc" /></PanelHead>
    <Tools>
      <HGrip $w={50} />
      {toolGroups.map((g, i) => (
        <React.Fragment key={i}>
          <ToolGroup $first={i === 0}>
            {g.map(([name, fly]) => (
              <Tool key={name} $fly={fly} $on={name === 'ellipse'}>
                <Draw width="34" height="34" $shadow>{toolArt[name]}</Draw>
              </Tool>
            ))}
          </ToolGroup>
          <ToolRule />
        </React.Fragment>
      ))}
      <ToolRow $h={32}>
        <Draw width="20" height="20"><rect x="9" y="9" width="10" height="10" fill="#ddd" stroke="#111" strokeWidth="2.500" /><rect x="1" y="1" width="12" height="12" fill="#fff" stroke="#999" strokeWidth="2" /></Draw>
        <Draw width="20" height="20"><path d="M5 5 H9 Q16 6 16 15" {...S} strokeWidth="2.500" /><path d="M1 5l7-5v10z M10 12h12l-6 7z" fill="#222" /></Draw>
      </ToolRow>
      <ToolRow $h={62}>
        <Draw width="52" height="52">
          <rect x="1" y="1" width="33" height="31" fill="#fff" stroke="#222" strokeWidth="2" />
          <rect x="5" y="5" width="25" height="23" fill="#000" />
          <rect x="17" y="17" width="34" height="34" fill="#000" stroke="#eee" strokeWidth="1" />
          <rect x="27" y="28" width="13" height="12" fill="#ddd" />
        </Draw>
      </ToolRow>
      <ToolRule $mb={1} />
      <ModeRow>
        <Draw width="54" height="18">
          <rect width="18" height="18" fill="#111" /><rect x="6" y="6" width="6" height="6" fill="#222" stroke="#ccc" strokeWidth="2" />
          <rect x="19" width="17" height="18" fill="url(#ramp)" /><rect x="37" width="17" height="18" fill="#fff" />
          <path d="M38 17 L53 1" stroke="#d0103a" strokeWidth="3.500" />
        </Draw>
      </ModeRow>
      <ToolRule />
      <ToolRow $h={38}>
        <Draw width="28" height="26"><circle cx="11" cy="11" r="10" fill="#f2f2f2" stroke="#333" strokeWidth="2" /><rect x="12" y="12" width="13" height="12" fill="#777" stroke="#222" strokeWidth="2" /></Draw>
      </ToolRow>
      <ToolRule />
      <ToolRow $h={42}>
        <Draw width="32" height="26" $shadow><rect x="2" y="11" width="18" height="12" fill="#fff" stroke="#777" strokeWidth="2" /><rect x="12" y="2" width="19" height="14" fill="#fafafa" stroke="#444" strokeWidth="2" /></Draw>
      </ToolRow>
    </Tools>
  </ToolColumn>
);

const Step = ({ d, bar }: { d: 'left' | 'right'; bar?: boolean }) => (
  <Draw width="14" height="16">
    <path d={d === 'left' ? 'M13 1V15L4 8Z' : 'M1 1V15L10 8Z'} fill="#777" />
    {bar && <path d={d === 'left' ? 'M2 0V16' : 'M12 0V16'} stroke="#777" strokeWidth="2.500" />}
  </Draw>
);

const AiDocument = () => (
  <Document>
    <TabStrip>
      <DocTab>
        clip_2.svg bei 79 % (RGB/Vorschau)
        <TabClose>
          <Draw width="13" height="14"><path d="M1 1L12 13M12 1L1 13" stroke="#555" strokeWidth="2.500" /></Draw>
        </TabClose>
      </DocTab>
    </TabStrip>
    <CanvasRow>
      <Canvas>
        <Artboard>
          <Selected width="160" height="160">
            <circle cx="80" cy="80" r="70" fill="#000" />
            <circle cx="80" cy="80" r="69" fill="none" stroke="#4f80ff" strokeWidth="1.600" />
            {[[80, 80], [80, 12], [80, 149], [11, 80], [149, 80]].map(([x, y]) => (
              <rect key={`${x}-${y}`} x={x - 4} y={y - 4} width="8" height="8" fill="#4f80ff" />
            ))}
          </Selected>
        </Artboard>
      </Canvas>
      <VScroll>
        <Chevron dir="up" sw={4} />
        <VThumb $mt={900} $h={34} $mb={902} />
        <Chevron sw={3.5} />
      </VScroll>
    </CanvasRow>
    <StatusRow>
      <StatusField $w={120} $pl={10}>79%<Chevron s={16} sw={2} /></StatusField>
      <Steps $w={65}><Step d="left" bar /><Step d="left" /></Steps>
      <StatusField $w={89} $pl={9}><PageNo>1</PageNo><Chevron s={16} sw={2} /></StatusField>
      <Steps $w={66}><Step d="right" /><Step d="right" bar /></Steps>
      <ToolName>Ellipse<Tri w={10} h={17} d="right" c="#000" ml={10} /></ToolName>
      <HScroll><Chevron dir="left" sw={3.5} /><HThumb /><Chevron dir="right" sw={3.5} /></HScroll>
      <ScrollCorner />
    </StatusRow>
  </Document>
);

const AiDock = () => (
  <Dock>
    <PanelHead $right><Tri w={8} h={9} d="left" c="#ccc" /><Tri w={8} h={9} d="left" c="#ccc" /></PanelHead>
    {dockGroups.map((g) => (
      <DockGroup key={g[0]}>
        <HGrip $w={54} />
        {g.map((n, i) => (
          <DockSlot key={n} $first={i === 0}>
            <Draw width="36" height="36" $shadow>{dockArt[n]}</Draw>
          </DockSlot>
        ))}
      </DockGroup>
    ))}
  </Dock>
);

const F = { fill: 'none', stroke: '#4a4a4c', strokeWidth: 4, strokeLinecap: 'round', strokeLinejoin: 'round' } as const;
const STAR = 'M16 2.500 L20 11.500 L30 12.500 L23 19 L25 29.500 L16 24.500 L7 29.500 L9 19 L2 12.500 L12 11.500Z';

const FirefoxWindow = () => (
  <Browser>
    <TitleBar>
      <BrowserTab>
        clip8 | Klippen
        <Draw width="20" height="20"><path d="M1.500 1.500L18.500 18.500M18.500 1.500L1.500 18.500" {...F} strokeWidth="3" /></Draw>
      </BrowserTab>
      <Draw width="28" height="28" $ml={20}><path d="M2 14H26M14 2V26" {...F} stroke="#b5b6c6" strokeWidth="3.500" /></Draw>
      <WindowControls>
        <Draw width="20" height="20"><path d="M0 9.500H20" stroke="#9c9db0" strokeWidth="2" /></Draw>
        <Draw width="20" height="20"><rect x="1" y="1" width="18" height="18" fill="none" stroke="#9c9db0" strokeWidth="2" /></Draw>
        <Draw width="20" height="20"><path d="M0 0L20 20M20 0L0 20" stroke="#9c9db0" strokeWidth="2" /></Draw>
      </WindowControls>
    </TitleBar>
    <NavBar>
      <BackButton><Draw width="32" height="32"><path d="M2 16H30M15 3L2 16L15 29" {...F} /></Draw></BackButton>
      <Draw width="32" height="32" $ml={16}><path d="M2 16H30M17 3L30 16L17 29" {...F} stroke="#b5b5b6" /></Draw>
      <Draw width="32" height="32" $ml={33}><path d="M28 20 A12 12.500 0 1 1 25 8" {...F} /><path d="M30 2V14H18Z" fill="#4a4a4c" /></Draw>
      <Draw width="32" height="32" $ml={31}><path d="M2 17L16 3L30 17M6 16V30H26V16" {...F} /><path d="M16 30V19" stroke="#4a4a4c" strokeWidth="7" /></Draw>
      <UrlBox>
        <Draw width="24" height="28"><path d="M12 2L22 4.500V13Q21 23 12 26Q3 23 2 13V4.500Z" {...F} strokeWidth="3.500" stroke="#5c5c5e" /><path d="M12 8V21Q8 18 7.500 13V9Z" fill="#5c5c5e" /></Draw>
        <UrlRule $h={42} $m="0 18px 0 15px" />
        <Draw width="24" height="28"><rect y="12" width="24" height="16" rx="2" fill="#5c5c5e" /><path d="M6 13V8Q6 2 12 2Q18 2 18 8V13" {...F} stroke="#5c5c5e" /></Draw>
        <Url>https://<b>broesamle.github.io</b>/clip_8/tutorial/kli</Url>
        <UrlActions>
          <Draw width="32" height="32"><g fill="#4a4a4c"><circle cx="4" cy="16" r="4" /><circle cx="16" cy="16" r="4" /><circle cx="28" cy="16" r="4" /></g></Draw>
          <Draw width="32" height="32"><path d="M2 4H30V15Q29 29 16 29Q3 29 2 15Z" {...F} stroke="#5c5c5e" /><path d="M10 13L16 19L22 13" {...F} stroke="#5c5c5e" /></Draw>
          <Draw width="32" height="32"><path d={STAR} {...F} strokeWidth="3.500" stroke="#5c5c5e" /></Draw>
        </UrlActions>
      </UrlBox>
      <NavIcons>
        <Draw width="32" height="32"><path d="M16 2L19 8.500L26 9.500L21 14L22.500 21L16 17.500L9.500 21L11 14L6 9.500L13 8.500Z" {...F} strokeWidth="3" /><path d="M3 24V30H29V24" {...F} /></Draw>
        <Draw width="32" height="32"><path d="M16 2V22M6 13L16 23L26 13M6 30H26" {...F} /></Draw>
        <Draw width="32" height="32"><path d="M3.500 4V28M10 7V28M16 7V28M22 5L30.500 28" {...F} strokeWidth="3.600" /></Draw>
        <Draw width="32" height="32"><rect x="2" y="4" width="28" height="25" rx="4" {...F} /><path d="M16 4V29" stroke="#4a4a4c" strokeWidth="3" /><path d="M7 10H12M7 15H12M7 20H11" stroke="#4a4a4c" strokeWidth="2" /></Draw>
        <Draw width="32" height="32"><circle cx="16" cy="16" r="13.300" {...F} strokeWidth="2" /><circle cx="16" cy="11.500" r="6" fill="#4a4a4c" /><path d="M7 19Q12 21.500 16 19.500Q20 21.500 25 19Q23 26 16 26Q9 26 7 19Z" fill="#4a4a4c" /></Draw>
      </NavIcons>
      <UrlRule $h={68} $m="0 28px 0 23px" />
      <Draw width="28" height="28"><path d="M3 4H23M3 14H23M3 24H23" {...F} /></Draw>
    </NavBar>
    <Viewport>
      <Page>
        <PageNav>
          <PageLink>Tutorial Start Page<br />&lt;&lt;&lt;&lt;</PageLink>
          <PageLink $bright>Online Interpreter</PageLink>
        </PageNav>
        <Heading>clip_8 | <b>Klippen</b></Heading>
        <Controls>
          <PageButton $w={60} $mr={20}><Draw width="20" height="20"><path d="M1 0L19 10L1 20Z" /></Draw></PageButton>
          <PageButton $w={54} $mr={20}><Draw width="14" height="20"><path d="M0 0h4v20h-4z M10 0h4v20h-4z" /></Draw></PageButton>
          <PageButton $w={51} $mr={20}><Draw width="12" height="20"><path d="M1.500 1L9.500 10L1.500 19" fill="none" stroke="#000" strokeWidth="3.500" /></Draw></PageButton>
          <PageButton $w={59} $mr={97}><Draw width="22" height="17"><path d="M0 0h3v17h-3z M13 0v17L3 8.500z M22 0v17L12 8.500z" /></Draw></PageButton>
          <PageButton $w={143} $mr={358} $h={38}>Browse...</PageButton>
          <Check />
          <CheckLabel>highlight I./S./C.</CheckLabel>
        </Controls>
        <Stage><Dot /></Stage>
        <PageHScroll>
          <Chevron dir="left" />
          <i />
          <Chevron dir="right" />
        </PageHScroll>
      </Page>
      <PageVScroll>
        <Chevron s={12} dir="up" sw={4} />
        <i />
        <Chevron s={12} sw={4} />
      </PageVScroll>
    </Viewport>
  </Browser>
);

const BottomBar = () => (
  <Taskbar>
    <TaskItem $w={72}>
      <Draw width="32" height="32"><path d="M0 5L13 3V15H0Z M15 2.500L32 0V15H15Z M0 17H13V29L0 27Z M15 17H32V32L15 29.500Z" /></Draw>
    </TaskItem>
    <TaskItem $w={72}>
      <Draw width="34" height="32"><circle cx="21" cy="12" r="11" fill="none" stroke="#000" strokeWidth="2" /><path d="M13 20L1 32" stroke="#000" strokeWidth="2" /></Draw>
    </TaskItem>
    <TaskItem $w={72}>
      <Draw width="34" height="32"><path d="M1 0V5H23V0 M1 32V26H23V32 M3 10H21V21H3Z M30 0V7M30 16V32" fill="none" stroke="#000" strokeWidth="2" /><circle cx="30" cy="12" r="3.500" /></Draw>
    </TaskItem>
    <TaskItem $w={83}>
      <Draw width="30" height="32"><path d="M1 4H12L15 8H28V26H1Z" fill="#e8a93b" /><path d="M1 9H29V28H1Z" fill="#ffd766" /><path d="M7 28V17H23V28H18V22H12V28Z" fill="#3a96dd" /></Draw>
    </TaskItem>
    <TaskItem $w={68}>
      <Draw width="32" height="32"><path d="M0 0H29L32 3V32H0Z" fill="#1838c8" /><rect x="8" y="0" width="15" height="11" fill="#e6eaf5" /><rect x="16" y="1" width="4" height="8" fill="#1838c8" /><rect x="4" y="15" width="24" height="17" fill="#fff" /><path d="M6 18H26M6 22H26M6 26H14" stroke="#c33" strokeWidth="1.500" /><path d="M16 27H26" stroke="#444" strokeWidth="4" strokeDasharray="4 2" /></Draw>
      <Running $w={56} />
    </TaskItem>
    <TaskItem $w={77}>
      <Draw width="32" height="32"><circle cx="16" cy="15" r="15.500" fill="#1f6fd0" /><path d="M20 1Q32 4 31 18Q29 28 20 32Q28 20 24 10Z" fill="#153f98" /><path d="M4 14Q16 6 25 15Q24 25 15 27Q8 27 4 22Z" fill="#f2f4f8" /><path d="M6 14L15 20L24 15" fill="none" stroke="#aab6c8" strokeWidth="2" /><path d="M1 8Q-2 24 8 31Q4 22 6 14Z" fill="#3d9be8" /></Draw>
      <Running $w={56} />
    </TaskItem>
    <TaskItem $w={72}>
      <Draw width="34" height="32"><path d="M3 12Q6 9 12 10Q18 9 26 3Q28 16 26 23Q20 27 13 24Q6 22 3 18Z" fill="#6a6257" /><ellipse cx="5" cy="16" rx="4.500" ry="4" fill="#222" /><circle cx="12" cy="12" r="2.500" fill="#fff" /><circle cx="18" cy="13" r="3" fill="#fff" /><circle cx="18" cy="13" r="1.500" /><path d="M20 20L33 28L30 30Z" fill="#999" /></Draw>
    </TaskItem>
    <TaskItem $w={76}><AdobeTile $bg="linear-gradient(135deg,#cc5028,#9a3416)" $fg="#34100a">Br</AdobeTile></TaskItem>
    <TaskItem $w={72} $on>
      <AdobeTile $bg="linear-gradient(135deg,#f39a12,#d87004)" $fg="#fff3c8">Ai</AdobeTile>
      <Running $w={72} />
    </TaskItem>
    <TaskItem $w={75}><AdobeTile $bg="linear-gradient(135deg,#1678c8,#063c80)" $fg="#a8e0ff">Ps</AdobeTile></TaskItem>
    <TaskItem $w={74}>
      <Draw width="32" height="32"><path d="M1 2H27V31H1Z" fill="#fdfdfd" stroke="#999" /><path d="M1 20H27V31H1Z" fill="#78c832" /><path d="M2 2H27" stroke="#777" strokeWidth="2.500" strokeDasharray="2 2" /><path d="M5 21V12H10V21 M12 16H17M14.500 13V19M19 16H24M21.500 13V19" fill="none" stroke="#333" strokeWidth="1.800" /><path d="M29 1L32 4L22 24L18 27L19 21Z" fill="#f0a020" stroke="#a06010" /></Draw>
      <Running $w={56} />
    </TaskItem>
    <TaskItem $w={76}>
      <Draw width="32" height="32"><circle cx="15" cy="15" r="12" fill="none" stroke="#7fa832" strokeWidth="6" /><path d="M14 13L21 14L31 27L27 31L18 22Z" fill="#8ab536" /><path d="M12 12L21 13L17 21Z" fill="#f08c28" /></Draw>
    </TaskItem>
    <TaskItem $w={72}>
      <Draw width="32" height="32"><circle cx="16" cy="16" r="15" fill="#e4ece8" stroke="#8aa09a" /><path d="M2 22Q8 4 20 5Q26 8 27 12Q12 8 2 22Z" fill="#4aa048" /><path d="M15 14Q18 10 22 13Q25 19 31 19" fill="none" stroke="#2c74b8" strokeWidth="3" /><path d="M15 14Q13 22 21 22Q26 24 24 31" fill="none" stroke="#246aa8" strokeWidth="4" /></Draw>
    </TaskItem>
    <TaskItem $w={73}>
      <Draw width="32" height="32"><path d="M5 1H30V30H1V6Z" fill="#e9f5e6" stroke="#2f8a44" strokeWidth="2" /><path d="M3 4H19V22H3Z" fill="#dff0dc" /><path d="M6 5L16 21" stroke="#1f7a34" strokeWidth="5" /><path d="M16 5L6 21" stroke="#3a9c4c" strokeWidth="4" /><path d="M21 16H28M8 26H28M20 21H28" stroke="#5db868" strokeWidth="2.500" /></Draw>
    </TaskItem>
    <TaskItem $w={76}>
      <Draw width="32" height="32"><path d="M16 0L23 8L16 15L9 8Z" fill="#f07c80" /><path d="M8 9L15 16L8 24L0 16Z" fill="#7aa8f0" /><path d="M24 9L32 16L24 24L17 16Z" fill="#7ccc68" /><path d="M16 17L23 25L16 33L9 25Z" fill="#f6dc80" /><path d="M14 6L20 12V20" fill="none" stroke="#fbe8e4" strokeWidth="2" /></Draw>
      <Running $w={56} $more />
    </TaskItem>
    <TaskItem $w={72}><Fox s={32} /><Running $w={56} $more /></TaskItem>
    <TaskItem $w={76}>
      <Draw width="34" height="32"><path d="M5 14Q1 8 3 5Q6 5 9 11Q7 3 10 1Q13 2 15 9Q14 2 17 0Q20 2 19 9Q21 2 24 1Q27 3 25 11Q28 5 31 5Q33 8 29 14Q34 19 31 24L26 23Q24 30 17 32Q10 30 8 23L3 24Q0 19 5 14Z" fill="#e8861c" /><circle cx="17" cy="18" r="8" fill="#f7c060" /><circle cx="17" cy="18" r="5.500" fill="#b82410" /><circle cx="17" cy="18" r="2.500" fill="#e05a30" /></Draw>
      <Running $w={56} />
    </TaskItem>
    <Tray>
      <Draw width="28" height="16" $ml={8}><path d="M1.500 14.500L14 2L26.500 14.500" fill="none" stroke="#111" strokeWidth="2.200" /></Draw>
      <Draw width="26" height="26" $ml={40}>
        <g fill="none" strokeWidth="2"><path d="M1 25A24 24 0 0 1 25 1" stroke="#a39b94" /><path d="M8 25A17 17 0 0 1 25 8M14 25A11 11 0 0 1 25 14" stroke="#111" strokeWidth="2.400" /></g><circle cx="22" cy="22" r="3.300" />
      </Draw>
      <Draw width="34" height="28" $ml={32}>
        <path d="M1 9H6L12 3V25L6 19H1Z" fill="none" stroke="#000" strokeWidth="2" /><path d="M17 9Q20 14 17 19" fill="none" stroke="#111" strokeWidth="2" /><path d="M22 5Q27 14 22 23M26 1Q34 14 26 27" fill="none" stroke="#aaa098" strokeWidth="2" />
      </Draw>
      <Clock>13:54</Clock>
      <Draw width="32" height="32" viewBox="0 0 32 32"><path d="M1 1H31V26H21L16 31L11 26H1Z" fill="none" stroke="#000" strokeWidth="2" /></Draw>
    </Tray>
  </Taskbar>
);

export default function App() {
  return (
    <Screen>
      <Global />
      <Defs />
      <Windows>
        <AiWindow>
          <AiMenu />
          <AiBody>
            <AiControls />
            <Work>
              <AiTools />
              <AiDocument />
              <AiDock />
            </Work>
          </AiBody>
        </AiWindow>
        <Desktop>
          <Fox s={88} />
          <DesktopLabel>clip_2.svg</DesktopLabel>
        </Desktop>
        <FirefoxWindow />
      </Windows>
      <BottomBar />
    </Screen>
  );
}
